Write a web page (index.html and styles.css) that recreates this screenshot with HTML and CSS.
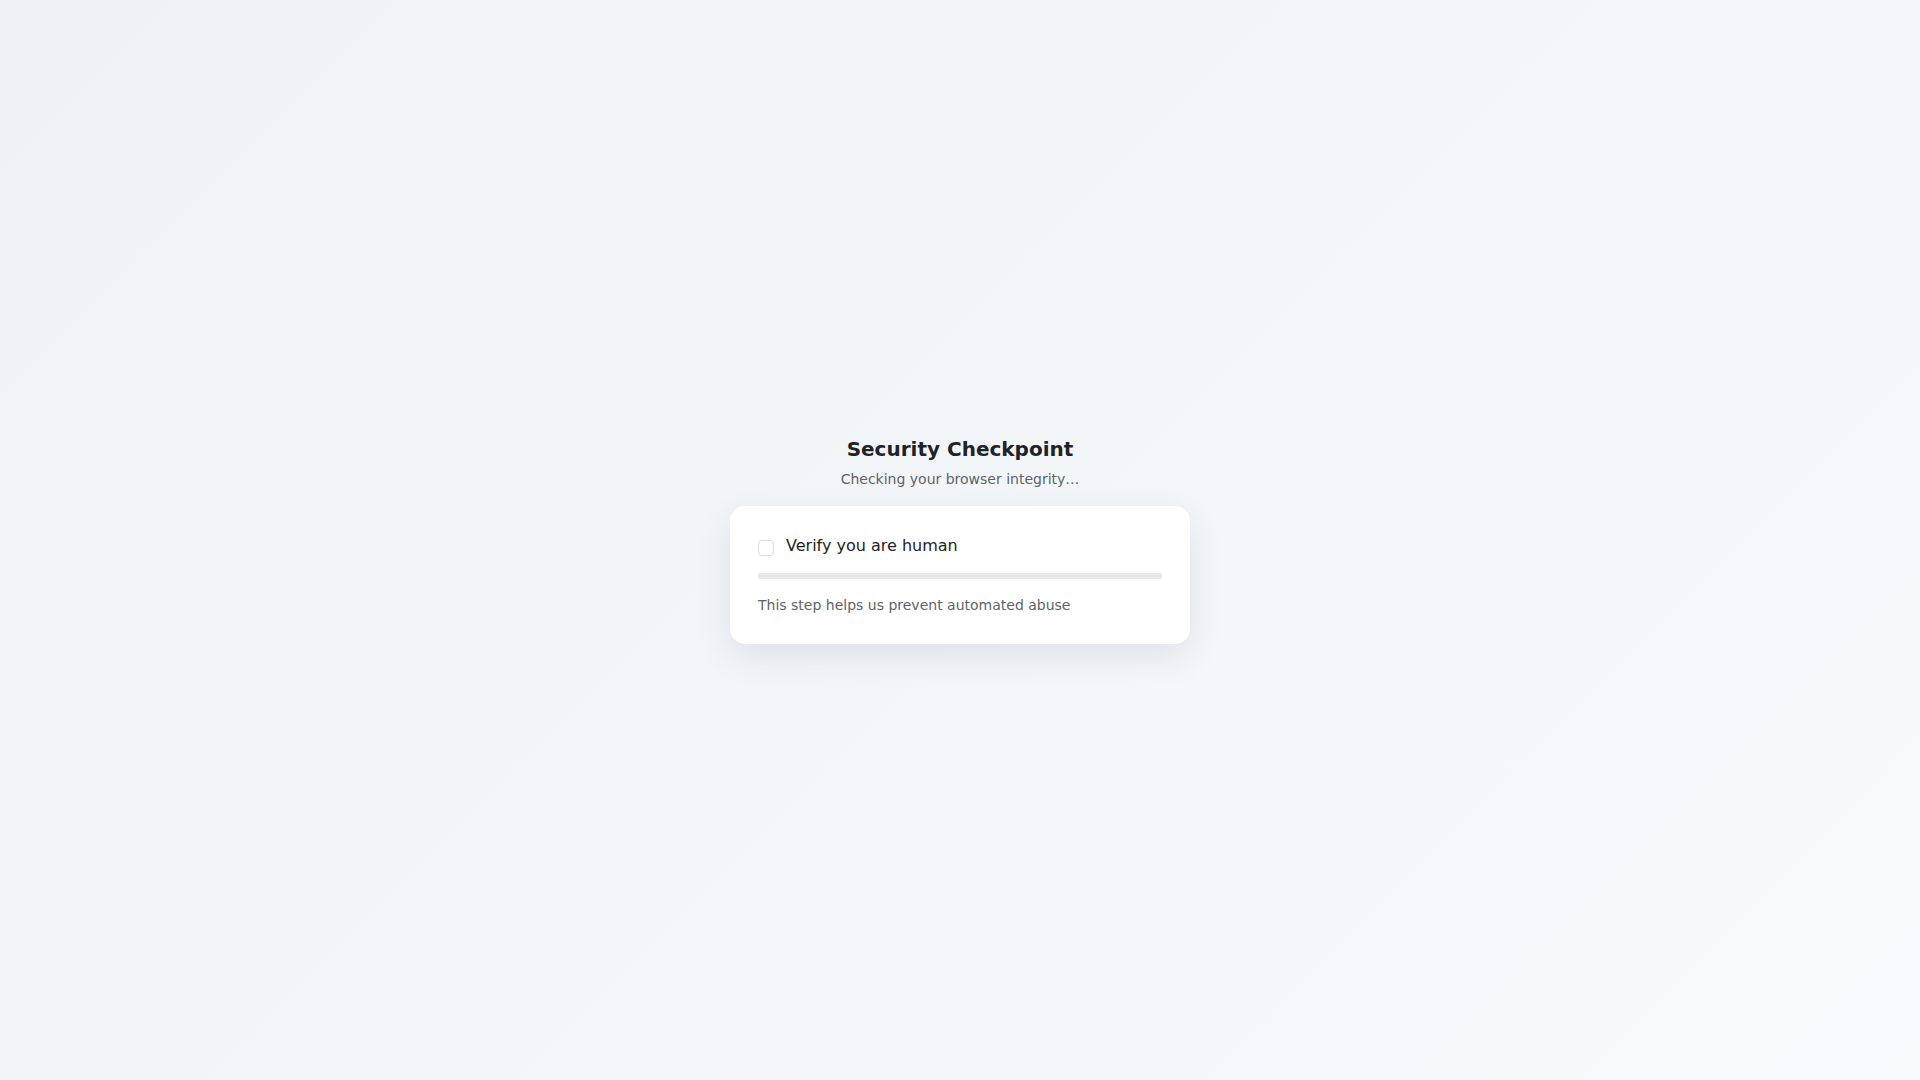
FILE: index.html
```html
<!DOCTYPE html>
<html lang="en">
<head>
<meta charset="utf-8">
<title>Security Checkpoint</title>
<link rel="stylesheet" href="styles.css">
</head>
<body>
<main class="page">
  <section class="checkpoint">
    <h1 class="title">Security Checkpoint</h1>
    <p class="subtitle">Checking your browser integrity…</p>
    <div class="card">
      <label class="verify">
        <span class="box"></span>
        <span class="verify-text">Verify you are human</span>
      </label>
      <div class="progress"><div class="progress-fill"></div></div>
      <p class="note">This step helps us prevent automated abuse</p>
    </div>
  </section>
</main>
</body>
</html>
```

FILE: styles.css
```css
html, body {
  margin: 0;
  padding: 0;
  height: 100%;
}
body {
  font-family: "DejaVu Sans", sans-serif;
  background: linear-gradient(135deg, #eef2f6 0%, #f3f6f9 50%, #f8f9fb 100%);
  color: #1f2328;
}
.page {
  box-sizing: border-box;
  min-height: 100vh;
  padding-top: 1px;
  display: flex;
  align-items: center;
  justify-content: center;
}
.checkpoint {
  width: 460px;
  display: flex;
  flex-direction: column;
  align-items: center;
}
.title {
  margin: 0;
  font-size: 20px;
  font-weight: bold;
  line-height: 23px;
  color: #1f2328;
}
.subtitle {
  margin: 10px 0 19px;
  font-size: 14px;
  line-height: 16px;
  color: #5f6368;
}
.card {
  box-sizing: border-box;
  width: 460px;
  background: #ffffff;
  border-radius: 15px;
  padding: 29px 28px 29px;
  box-shadow: 0 12px 36px rgba(15, 23, 42, 0.09);
}
.verify {
  display: flex;
  align-items: flex-start;
  gap: 12px;
}
.box {
  box-sizing: border-box;
  width: 16px;
  height: 16px;
  margin-top: 5px;
  border: 1px solid #d9dde2;
  border-radius: 4px;
  background: #fff;
  flex: none;
}
.verify-text {
  font-size: 16px;
  line-height: 22px;
  color: #1f2328;
}
.progress {
  margin-top: 16px;
  height: 6px;
  border-radius: 3px;
  background: #e6e9ed;
  overflow: hidden;
}
.progress-fill {
  width: 0;
  height: 100%;
}
.note {
  margin: 17px 0 0;
  font-size: 14px;
  line-height: 19px;
  color: #5f6368;
}
```
